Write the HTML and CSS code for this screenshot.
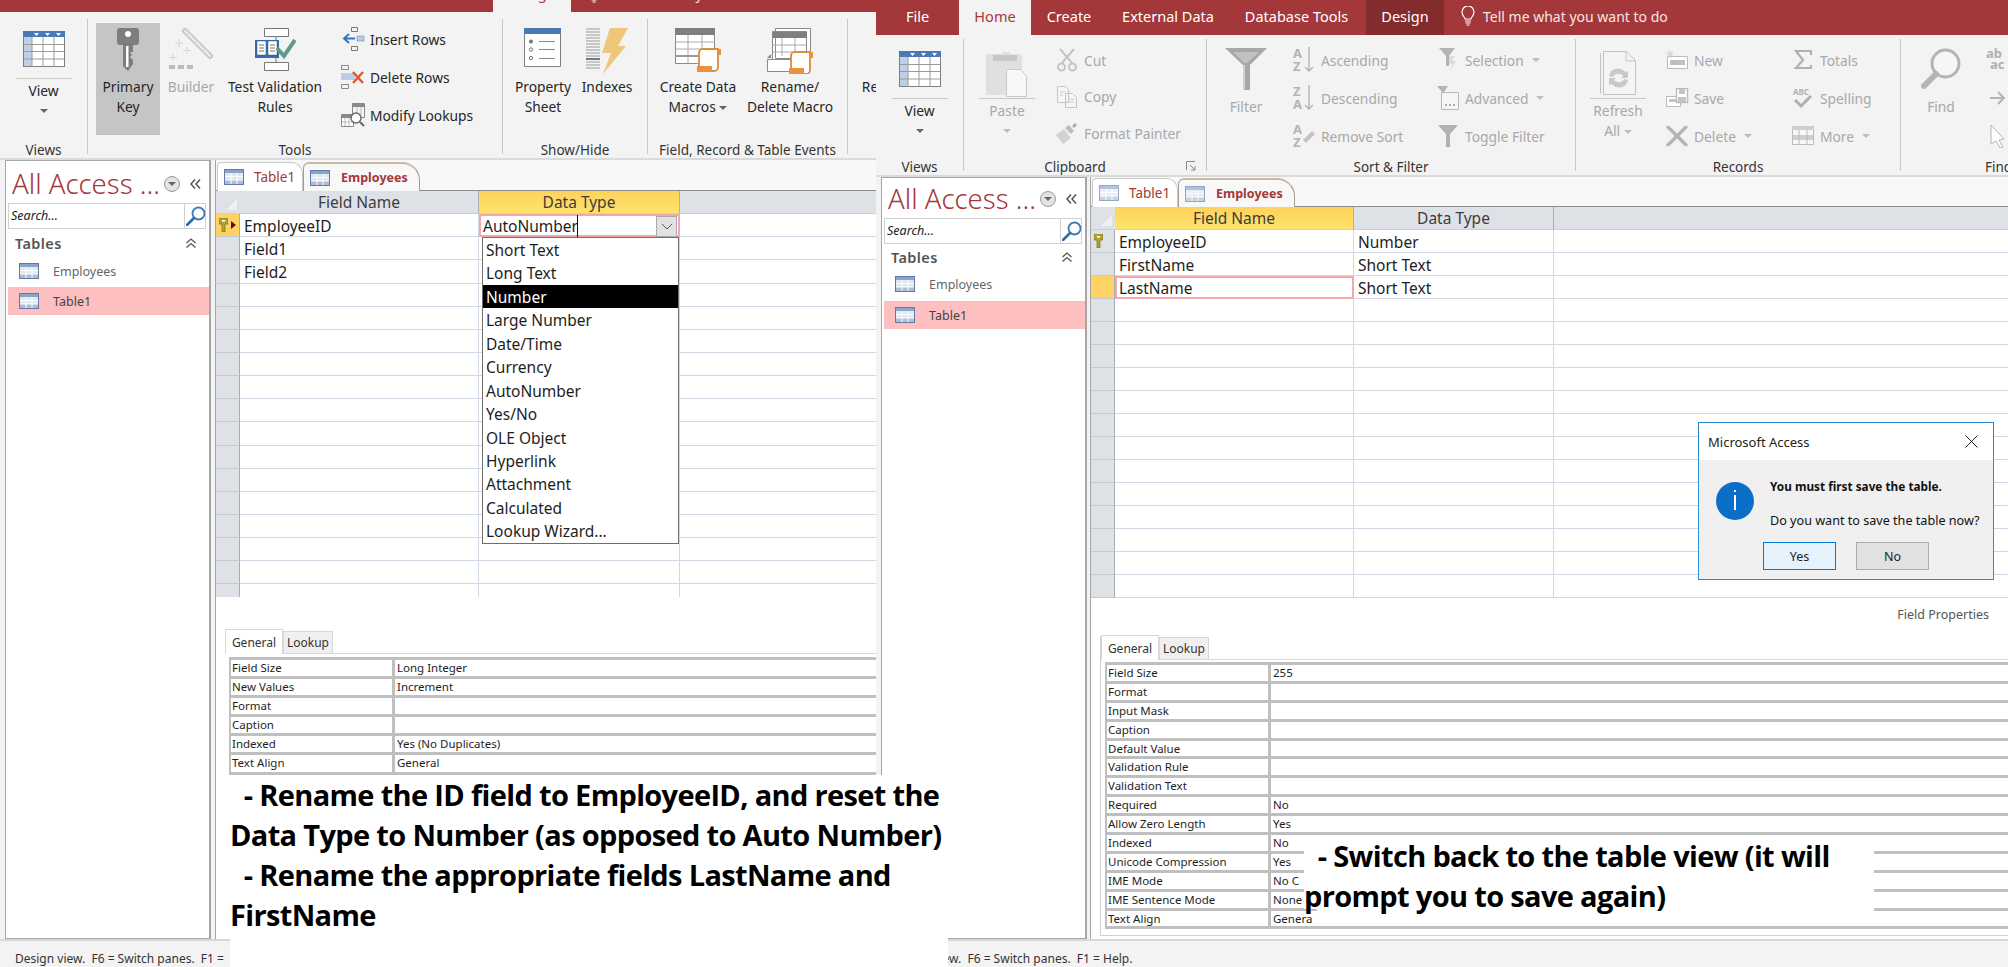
FILE: index.html
```html
<!DOCTYPE html>
<html lang="en">
<head>
    <meta charset="UTF-8">
    <meta name="viewport" content="width=device-width, initial-scale=1.0">
    <title>Access table design steps</title>
    <link rel="stylesheet" href="styles.css">
</head>
<body>
<svg class="defs" width="0" height="0">
    <defs>
        <symbol id="i-view" viewBox="0 0 42 36">
            <rect x="0.5" y="0.5" width="41" height="35" fill="#fff" stroke="#7f7f7f"/>
            <rect x="0" y="0" width="42" height="6" fill="#4a79b5"/>
            <rect x="1" y="6" width="8" height="29" fill="#bdd0e6"/>
            <path d="M9 6v30M20 6v30M31 6v30M1 13.5h40M1 20.5h40M1 28h40" stroke="#9a9a9a" fill="none"/>
            <path d="M11 2h5l-2.500 3zM22 2h5l-2.500 3zM33 2h5l-2.500 3z" fill="#fff"/>
        </symbol>
        <symbol id="i-tab" viewBox="0 0 20 16">
            <rect x="0.500" y="0.500" width="19" height="15" fill="#dfe7f2" stroke="#5f7ba6"/>
            <rect x="1" y="1" width="18" height="3" fill="#8aa5cc"/>
            <rect x="1" y="11" width="18" height="4" fill="#aebdd3"/>
            <path d="M7 4v11M13 4v11M1 7.500h18M1 11h18" stroke="#fff" fill="none"/>
        </symbol>
        <symbol id="i-key" viewBox="0 0 22 44">
            <path d="M3 0h16a3 3 0 0 1 3 3v11a3 3 0 0 1-3 3h-3v19l-5 7-5-5V17H3a3 3 0 0 1-3-3V3a3 3 0 0 1 3-3z" fill="#7d7d7d"/>
            <circle cx="11" cy="6" r="3" fill="#fff"/>
            <path d="M9 18h2.500v21H9z" fill="#fff"/>
            <path d="M16 24h-3l2 3-2 2 3 3z" fill="#c5c5c5"/>
        </symbol>
        <symbol id="i-builder" viewBox="0 0 44 44">
            <path d="M16 3l25 25" stroke="#c9c9c9" stroke-width="6" stroke-linecap="round" fill="none"/>
            <path d="M16 3l25 25" stroke="#ececec" stroke-width="2" stroke-linecap="round" fill="none"/>
            <path d="M10 11v8M6 15h8M18 19v7M14 22.500h8M4 26v7M0 29.500h8" stroke="#d4d4d4" fill="none"/>
            <path d="M0 37h6v4H0zM9 37h6v4H9zM18 37h6v4h-6z" fill="#bdbdbd"/>
        </symbol>
        <symbol id="i-validate" viewBox="0 0 42 44">
            <path d="M10.500.500h24v8h-24zM10.500 34.500h24v8h-24zM22 8v4M22 30v4" fill="#fff" stroke="#777"/>
            <path d="M1 12h24v18H1z" fill="#2f6fb5"/>
            <path d="M3 13h9v14H3zM14 13h9v14h-9z" fill="#fff" stroke="#555" stroke-width=".5"/>
            <path d="M5 17h5M5 20h5M5 23h5M16 17h5M16 20h5M16 23h5" stroke="#777"/>
            <path d="M23 20l7 8L41 12" stroke="#5f9b87" stroke-width="4" fill="none"/>
        </symbol>
        <symbol id="i-insert" viewBox="0 0 22 24">
            <path d="M9.500.500h6v4h-6zM9.500 19.500h6v4h-6z" fill="none" stroke="#777"/>
            <path d="M15 9h7v5h-7z" fill="#b9cde4" stroke="#7d9cc0" stroke-width=".7"/>
            <path d="M13 11.500H3M7 7l-5 4.500L7 16" stroke="#2f78c4" stroke-width="2" fill="none"/>
        </symbol>
        <symbol id="i-delrows" viewBox="0 0 24 24">
            <path d="M.500.500h7v4h-7zM.500 19.500h7v4h-7z" fill="none" stroke="#888"/>
            <path d="M0 8h14v7H0z" fill="#b9cde4"/>
            <path d="M12 7l10 11M22 7L12 18" stroke="#e2582c" stroke-width="2.400" fill="none"/>
        </symbol>
        <symbol id="i-lookups" viewBox="0 0 24 24">
            <path d="M11.500.500h12v14h-12z" fill="#f4f4f4" stroke="#888"/>
            <path d="M12 1h11v3H12z" fill="#8a8a8a"/>
            <path d="M.500 11.500h12v12H.500z" fill="#fff" stroke="#888"/>
            <path d="M1 12h11v3H1z" fill="#8a8a8a"/>
            <path d="M4 15v8M8 15v8M1 19h11M16 4v8M20 4v8" stroke="#bbb"/>
            <circle cx="15" cy="15" r="5" fill="#fff" stroke="#666" stroke-width="1.400"/>
            <path d="M19 19l4 4" stroke="#666" stroke-width="2"/>
        </symbol>
        <symbol id="i-sheet" viewBox="0 0 38 40">
            <path d="M.500.500h36v38H.500z" fill="#fff" stroke="#7f7f7f"/>
            <path d="M0 0h37v6H0z" fill="#4a79b5"/>
            <path d="M15 13.500h16M15 21.500h16M15 30.500h16" stroke="#888"/>
            <circle cx="7" cy="13.500" r="2" fill="#777"/>
            <circle cx="7" cy="21.500" r="1.700" fill="#fff" stroke="#777"/>
            <circle cx="7" cy="30" r="1.700" fill="#fff" stroke="#777"/>
        </symbol>
        <symbol id="i-indexes" viewBox="0 0 42 46">
            <path d="M0 1h14M0 4h14M0 7h14M0 10h14M0 13h14M0 16h14M0 19h14M0 22h14M0 25h14M0 28h14M0 31h14M0 34h14M0 37h14M0 40h14" stroke="#9a9a9a"/>
            <path d="M0 31h14" stroke="#777" stroke-width="2"/>
            <path d="M24 0h18L32 18h8L17 46l8-21h-9z" fill="#eec77c"/>
        </symbol>
        <symbol id="i-macro" viewBox="0 0 46 44">
            <path d="M.500.500h39v35H.500z" fill="#fff" stroke="#8a8a8a"/>
            <path d="M0 0h40v7H0z" fill="#7f7f7f"/>
            <path d="M13 7v28M27 7v28M1 14h39M1 21h39M1 28h39" stroke="#aaa"/>
            <path d="M0 27h24v2H0z" fill="#999"/>
            <path d="M27 21h16v18a4 4 0 0 1-4 4H26a4 4 0 0 1-2-2V25a4 4 0 0 1 3-4z" fill="#fff" stroke="#e08a3c" stroke-width="1.800"/>
            <path d="M42 21h4v6h-4zM22 38h15v6H22z" fill="#e8913f"/>
        </symbol>
        <symbol id="i-rename" viewBox="0 0 46 46">
            <path d="M8.500.500h35v30h-35zM5.500 3.500h34v30h-34z" fill="#fff" stroke="#8a8a8a"/>
            <path d="M6 4h34v6H6z" fill="#7f7f7f"/>
            <path d="M15 10v18M28 10v18M6 17h33M6 24h33" stroke="#aaa"/>
            <path d="M.500 31.500h30v12H.500z" fill="#fff" stroke="#8a8a8a"/>
            <path d="M0 30l4-4v4z" fill="#888"/>
            <path d="M27 24h16v18a4 4 0 0 1-4 4H26a4 4 0 0 1-2-2V28a4 4 0 0 1 3-4z" fill="#fff" stroke="#e08a3c" stroke-width="1.800"/>
            <path d="M42 24h4v6h-4zM22 40h15v6H22z" fill="#e8913f"/>
        </symbol>
        <symbol id="i-paste" viewBox="0 0 42 46">
            <path d="M2 3h14V1h8v2h10a2 2 0 0 1 2 2v37a2 2 0 0 1-2 2H2a2 2 0 0 1-2-2V5a2 2 0 0 1 2-2z" fill="#e1dfe1"/>
            <path d="M7 4h24v6H7z" fill="#c8c6c8"/>
            <path d="M20.500 18.500h14l6 7v20h-20z" fill="#f8f8f8" stroke="#c8c8c8"/>
        </symbol>
        <symbol id="i-cut" viewBox="0 0 20 24">
            <path d="M3 1l12 14M17 1L5 15" stroke="#c4c4c4" stroke-width="2" fill="none"/>
            <circle cx="4.500" cy="19" r="3.500" fill="none" stroke="#c4c4c4" stroke-width="2"/>
            <circle cx="15.500" cy="19" r="3.500" fill="none" stroke="#c4c4c4" stroke-width="2"/>
        </symbol>
        <symbol id="i-copy" viewBox="0 0 20 22">
            <path d="M.500.500h8l3 3v13H.500zM8.500 7.500h7l4 4v10h-11z" fill="#f6f6f6" stroke="#c4c4c4"/>
            <path d="M3 6h6M3 9h3M11 13h6M11 16h6" stroke="#ccc"/>
        </symbol>
        <symbol id="i-painter" viewBox="0 0 22 22">
            <path d="M0 13l8-6 7 9-8 6z" fill="#d2d2d2"/>
            <path d="M9 6l4-3 5 6-3 3z" fill="#bdbdbd"/>
            <path d="M16 4l3-3 2 2-3 3z" fill="#a9a9a9"/>
        </symbol>
        <symbol id="i-funnel" viewBox="0 0 42 42">
            <path d="M0 0h42L25 17v25h-7V17z" fill="#a8a6a8"/>
            <path d="M18 17h2v25h-2z" fill="#d0d0d0"/>
            <path d="M8 4h26L22 15h-3z" fill="#c2c0c2"/>
        </symbol>
        <symbol id="i-asc" viewBox="0 0 22 26">
            <text x="0" y="11" class="svg-az">A</text>
            <text x="0" y="24" class="svg-az">Z</text>
            <path d="M16 0v24M12 20l4 4 4-4" stroke="#b4b4b4" stroke-width="1.400" fill="none"/>
        </symbol>
        <symbol id="i-desc" viewBox="0 0 22 26">
            <text x="0" y="11" class="svg-az">Z</text>
            <text x="0" y="24" class="svg-az">A</text>
            <path d="M16 0v24M12 20l4 4 4-4" stroke="#b4b4b4" stroke-width="1.400" fill="none"/>
        </symbol>
        <symbol id="i-rmsort" viewBox="0 0 22 26">
            <text x="0" y="11" class="svg-az">A</text>
            <text x="0" y="24" class="svg-az">Z</text>
            <path d="M10 17l9-9 3 3-9 9z" fill="#c4c4c4"/>
        </symbol>
        <symbol id="i-selection" viewBox="0 0 18 24">
            <path d="M0 0h16L10 8v10H7V8z" fill="#b4b4b4"/>
            <path d="M10 8h6l-3 5h4l-6 10 2-7h-3z" fill="#dcdcdc"/>
        </symbol>
        <symbol id="i-advanced" viewBox="0 0 22 24">
            <path d="M0 0h11L7 6v9H5V6z" fill="#b4b4b4"/>
            <path d="M4.500 6.500h17v17h-17z" fill="#f6f6f6" stroke="#b8b8b8"/>
            <path d="M8 18h2v2H8zM12 18h2v2h-2zM16 18h2v2h-2z" fill="#aaa"/>
        </symbol>
        <symbol id="i-toggle" viewBox="0 0 20 22">
            <path d="M0 0h20L12 9v13H8V9z" fill="#b2b2b2"/>
        </symbol>
        <symbol id="i-refresh" viewBox="0 0 36 46">
            <path d="M.500 2.500v40M3.500.500h23l9 9v34h-32z" fill="#f6f3f7" stroke="#c2c2c2"/>
            <path d="M26 1v9h9" fill="none" stroke="#c2c2c2"/>
            <path d="M9 25a9 9 0 0 1 16-4l3-1v7h-7l2-2a6 6 0 0 0-10 1zM28 29a9 9 0 0 1-16 4l-3 1v-7h7l-2 2a6 6 0 0 0 10-1z" fill="#c9c9c9"/>
        </symbol>
        <symbol id="i-new" viewBox="0 0 22 20">
            <path d="M1.500 6.500h20v12h-20z" fill="#fff" stroke="#bbb"/>
            <path d="M4 10h15v5H4z" fill="#bfbfbf"/>
            <path d="M4 0v8M0 4h8M1 1l6 6M7 1L1 7" stroke="#d4d4d4"/>
        </symbol>
        <symbol id="i-save" viewBox="0 0 22 20">
            <path d="M.500 8.500h14v10H.500z" fill="#fff" stroke="#bbb"/>
            <path d="M3 11h8v3H3z" fill="#c4c4c4"/>
            <path d="M10.500.500h11v14h-11z" fill="#fff" stroke="#bbb" stroke-width="1.400"/>
            <path d="M13 1h6v5h-6zM12 9h8v5h-8z" fill="#c4c4c4"/>
        </symbol>
        <symbol id="i-delete" viewBox="0 0 22 20">
            <path d="M2 1l18 18M20 1L2 19" stroke="#b4b4b4" stroke-width="3.400" stroke-linecap="round"/>
        </symbol>
        <symbol id="i-sigma" viewBox="0 0 18 20">
            <path d="M17 5V1H2l7 9-7 8h15v-3" fill="none" stroke="#b0b0b0" stroke-width="2.200"/>
        </symbol>
        <symbol id="i-spell" viewBox="0 0 20 22">
            <text x="0" y="8" class="svg-abc">ABC</text>
            <path d="M2 13l6 6L18 9" stroke="#b0b0b0" stroke-width="3" fill="none"/>
        </symbol>
        <symbol id="i-more" viewBox="0 0 22 20">
            <path d="M.500.500h21v18h-21z" fill="#f7f7f7" stroke="#bbb"/>
            <path d="M0 0h22v4H0zM1 9h20v5H1z" fill="#cfcfcf"/>
            <path d="M7 4v15M15 4v15" stroke="#bbb"/>
        </symbol>
        <symbol id="i-find" viewBox="0 0 40 42">
            <circle cx="24.500" cy="15.500" r="13.500" fill="#f7f5f8" stroke="#b4b4b4" stroke-width="3"/>
            <path d="M15 26L3 38" stroke="#b4b4b4" stroke-width="6" stroke-linecap="round"/>
        </symbol>
        <symbol id="i-goto" viewBox="0 0 16 14">
            <path d="M0 7h13M8 1l6 6-6 6" fill="none" stroke="#b4b4b4" stroke-width="2"/>
        </symbol>
        <symbol id="i-arrow" viewBox="0 0 16 24">
            <path d="M1 1l13 14-5 1 4 7-3 1-4-7-5 3z" fill="#fff" stroke="#b4b4b4"/>
        </symbol>
        <symbol id="i-bulb" viewBox="0 0 14 20">
            <path d="M4 13c0-2-3-3-3-7a6 6 0 0 1 12 0c0 4-3 5-3 7z" fill="none" stroke="#fff" stroke-width="1.200"/>
            <path d="M4 15h6M4.500 17h5M5.500 19h3" stroke="#fff" stroke-width="1.200"/>
        </symbol>
        <symbol id="i-search" viewBox="0 0 20 20">
            <circle cx="12.500" cy="7.500" r="6" fill="none" stroke="#3f7cb8" stroke-width="1.800"/>
            <path d="M8 12l-7 7" stroke="#2d6aa8" stroke-width="2.600" stroke-linecap="round"/>
        </symbol>
        <symbol id="i-keysmall" viewBox="0 0 9 14">
            <path d="M0 0h9v6H6v8H3V6H0z" fill="#b5a52e" stroke="#6a5f14" stroke-width=".6"/>
            <path d="M3 2h3v1.500H3z" fill="#fff"/>
        </symbol>
        <symbol id="i-chev-left" viewBox="0 0 11 10">
            <path d="M5 .500L1 5l4 4.500M10 .500L6 5l4 4.500" fill="none" stroke="#555" stroke-width="1.500"/>
        </symbol>
        <symbol id="i-chev-up" viewBox="0 0 10 10">
            <path d="M.500 5L5 1l4.500 4M.500 9.500L5 5.500l4.500 4" fill="none" stroke="#555" stroke-width="1.300"/>
        </symbol>
    </defs>
</svg>

<div class="desktop">

    <!-- left screenshot -->
    <div class="window window-left">
        <div class="titlebar-cut">
            <div class="titlebar titlebar-shifted">
                <span class="tab-spacer"></span>
                <span class="top-tab top-tab-on">Design</span>
                <span class="tell tell-cut"><svg class="bulb"><use href="#i-bulb"/></svg>Tell me what you want to do</span>
            </div>
        </div>
        <div class="ribbon">
            <section class="group g-views">
                <div class="group-body">
                    <div class="big split">
                        <div class="big-icon"><svg width="42" height="36"><use href="#i-view"/></svg></div>
                        <div class="rule"></div>
                        <div>View</div>
                        <div class="caret-line"><span class="caret"></span></div>
                    </div>
                </div>
                <div class="group-label">Views</div>
            </section>
            <section class="group g-tools">
                <div class="group-body">
                    <div class="big big-pressed w64">
                        <div class="big-icon"><svg width="22" height="44"><use href="#i-key"/></svg></div>
                        <div>Primary<br>Key</div>
                    </div>
                    <div class="big off w62">
                        <div class="big-icon"><svg width="44" height="44"><use href="#i-builder"/></svg></div>
                        <div>Builder</div>
                    </div>
                    <div class="big w106">
                        <div class="big-icon"><svg width="42" height="44"><use href="#i-validate"/></svg></div>
                        <div>Test Validation<br>Rules</div>
                    </div>
                    <div class="small-col col-rows">
                        <div class="small"><svg width="22" height="24"><use href="#i-insert"/></svg>Insert Rows</div>
                        <div class="small"><svg width="24" height="24"><use href="#i-delrows"/></svg>Delete Rows</div>
                        <div class="small"><svg width="24" height="24"><use href="#i-lookups"/></svg>Modify Lookups</div>
                    </div>
                </div>
                <div class="group-label">Tools</div>
            </section>
            <section class="group g-show">
                <div class="group-body">
                    <div class="big w70">
                        <div class="big-icon"><svg width="38" height="40"><use href="#i-sheet"/></svg></div>
                        <div>Property<br>Sheet</div>
                    </div>
                    <div class="big w58">
                        <div class="big-icon"><svg width="42" height="46"><use href="#i-indexes"/></svg></div>
                        <div>Indexes</div>
                    </div>
                </div>
                <div class="group-label">Show/Hide</div>
            </section>
            <section class="group g-events">
                <div class="group-body">
                    <div class="big w92">
                        <div class="big-icon"><svg width="46" height="44"><use href="#i-macro"/></svg></div>
                        <div>Create Data<br>Macros <span class="caret"></span></div>
                    </div>
                    <div class="big w92">
                        <div class="big-icon"><svg width="46" height="46"><use href="#i-rename"/></svg></div>
                        <div>Rename/<br>Delete Macro</div>
                    </div>
                </div>
                <div class="group-label">Field, Record &amp; Table Events</div>
            </section>
            <section class="group g-cut">
                <div class="group-body">
                    <div class="big w60">
                        <div class="big-icon"></div>
                        <div class="cut-text">Re</div>
                    </div>
                </div>
            </section>
        </div>
        <div class="content">
            <aside class="nav">
                <div class="nav-head">
                    <span class="nav-title">All Access ...</span>
                    <span class="nav-drop"><span class="caret"></span></span>
                    <svg class="nav-chev" width="11" height="10"><use href="#i-chev-left"/></svg>
                </div>
                <div class="nav-search">
                    <span class="nav-search-text">Search...</span>
                    <span class="nav-search-btn"><svg width="20" height="20"><use href="#i-search"/></svg></span>
                </div>
                <div class="nav-section"><span>Tables</span><svg width="10" height="10"><use href="#i-chev-up"/></svg></div>
                <div class="nav-item"><svg width="20" height="16"><use href="#i-tab"/></svg>Employees</div>
                <div class="nav-item nav-item-on"><svg width="20" height="16"><use href="#i-tab"/></svg>Table1</div>
            </aside>
            <main class="main">
                <div class="doc-tabs">
                    <div class="doc-tab"><svg width="20" height="16"><use href="#i-tab"/></svg>Table1</div>
                    <div class="doc-tab doc-tab-on"><svg width="20" height="16"><use href="#i-tab"/></svg>Employees</div>
                </div>
                <div class="grid">
                    <div class="row head">
                        <div class="sel corner"></div>
                        <div class="cell">Field Name</div>
                        <div class="cell hot">Data Type</div>
                        <div class="cell fill"></div>
                    </div>
                    <div class="row">
                        <div class="sel sel-on"><svg width="9" height="14"><use href="#i-keysmall"/></svg><span class="sel-arrow"></span></div>
                        <div class="cell">EmployeeID</div>
                        <div class="cell active">AutoNumber<span class="text-caret"></span><span class="combo-btn"><svg width="10" height="6"><path d="M0 0l5 5 5-5" fill="none" stroke="#555"/></svg></span></div>
                        <div class="cell fill"></div>
                    </div>
                    <div class="row"><div class="sel"></div><div class="cell">Field1</div><div class="cell"></div><div class="cell fill"></div></div>
                    <div class="row"><div class="sel"></div><div class="cell">Field2</div><div class="cell"></div><div class="cell fill"></div></div>
                    <div class="row"><div class="sel"></div><div class="cell"></div><div class="cell"></div><div class="cell fill"></div></div>
                    <div class="row"><div class="sel"></div><div class="cell"></div><div class="cell"></div><div class="cell fill"></div></div>
                    <div class="row"><div class="sel"></div><div class="cell"></div><div class="cell"></div><div class="cell fill"></div></div>
                    <div class="row"><div class="sel"></div><div class="cell"></div><div class="cell"></div><div class="cell fill"></div></div>
                    <div class="row"><div class="sel"></div><div class="cell"></div><div class="cell"></div><div class="cell fill"></div></div>
                    <div class="row"><div class="sel"></div><div class="cell"></div><div class="cell"></div><div class="cell fill"></div></div>
                    <div class="row"><div class="sel"></div><div class="cell"></div><div class="cell"></div><div class="cell fill"></div></div>
                    <div class="row"><div class="sel"></div><div class="cell"></div><div class="cell"></div><div class="cell fill"></div></div>
                    <div class="row"><div class="sel"></div><div class="cell"></div><div class="cell"></div><div class="cell fill"></div></div>
                    <div class="row"><div class="sel"></div><div class="cell"></div><div class="cell"></div><div class="cell fill"></div></div>
                    <div class="row"><div class="sel"></div><div class="cell"></div><div class="cell"></div><div class="cell fill"></div></div>
                    <div class="row"><div class="sel"></div><div class="cell"></div><div class="cell"></div><div class="cell fill"></div></div>
                    <div class="row"><div class="sel"></div><div class="cell"></div><div class="cell"></div><div class="cell fill"></div></div>
                    <div class="row"><div class="sel"></div><div class="cell"></div><div class="cell"></div><div class="cell fill"></div></div>
                    <ul class="dropdown">
                        <li>Short Text</li>
                        <li>Long Text</li>
                        <li class="dropdown-on">Number</li>
                        <li>Large Number</li>
                        <li>Date/Time</li>
                        <li>Currency</li>
                        <li>AutoNumber</li>
                        <li>Yes/No</li>
                        <li>OLE Object</li>
                        <li>Hyperlink</li>
                        <li>Attachment</li>
                        <li>Calculated</li>
                        <li>Lookup Wizard...</li>
                    </ul>
                </div>
                <div class="field-props"></div>
                <div class="props">
                    <div class="props-tabs">
                        <div class="props-tab props-tab-on">General</div>
                        <div class="props-tab">Lookup</div>
                    </div>
                    <div class="props-table">
                        <div class="prop"><span>Field Size</span><span>Long Integer</span></div>
                        <div class="prop"><span>New Values</span><span>Increment</span></div>
                        <div class="prop"><span>Format</span><span></span></div>
                        <div class="prop"><span>Caption</span><span></span></div>
                        <div class="prop"><span>Indexed</span><span>Yes (No Duplicates)</span></div>
                        <div class="prop"><span>Text Align</span><span>General</span></div>
                    </div>
                </div>
            </main>
        </div>
        <div class="status">Design view.&nbsp; F6 = Switch panes.&nbsp; F1 =</div>
    </div>

    <!-- right screenshot -->
    <div class="window window-right">
        <div class="titlebar">
            <span class="top-tab t-file">File</span>
            <span class="top-tab top-tab-on t-home">Home</span>
            <span class="top-tab t-create">Create</span>
            <span class="top-tab t-external">External Data</span>
            <span class="top-tab t-db">Database Tools</span>
            <span class="top-tab top-tab-dark">Design</span>
            <span class="tell"><svg class="bulb"><use href="#i-bulb"/></svg>Tell me what you want to do</span>
        </div>
        <div class="ribbon">
            <section class="group g-views">
                <div class="group-body">
                    <div class="big split">
                        <div class="big-icon"><svg width="42" height="36"><use href="#i-view"/></svg></div>
                        <div class="rule"></div>
                        <div>View</div>
                        <div class="caret-line"><span class="caret"></span></div>
                    </div>
                </div>
                <div class="group-label">Views</div>
            </section>
            <section class="group g-clip">
                <div class="group-body">
                    <div class="big split off w60">
                        <div class="big-icon"><svg width="42" height="46"><use href="#i-paste"/></svg></div>
                        <div class="rule"></div>
                        <div>Paste</div>
                        <div class="caret-line"><span class="caret"></span></div>
                    </div>
                    <div class="small-col off col-clip">
                        <div class="small"><svg width="20" height="24"><use href="#i-cut"/></svg>Cut</div>
                        <div class="small"><svg width="20" height="22"><use href="#i-copy"/></svg>Copy</div>
                        <div class="small"><svg width="22" height="22"><use href="#i-painter"/></svg>Format Painter</div>
                    </div>
                </div>
                <div class="group-label label-launcher">Clipboard<svg class="launcher" width="10" height="10"><path d="M.500 9V.500H9M4 4l5 5M9 5v4H5" fill="none" stroke="#888"/></svg></div>
            </section>
            <section class="group g-sort">
                <div class="group-body">
                    <div class="big off w60">
                        <div class="big-icon"><svg width="42" height="42"><use href="#i-funnel"/></svg></div>
                        <div>Filter</div>
                    </div>
                    <div class="small-col off col-sort">
                        <div class="small"><svg width="22" height="26"><use href="#i-asc"/></svg>Ascending</div>
                        <div class="small"><svg width="22" height="26"><use href="#i-desc"/></svg>Descending</div>
                        <div class="small"><svg width="22" height="26"><use href="#i-rmsort"/></svg>Remove Sort</div>
                    </div>
                    <div class="small-col off col-filter">
                        <div class="small"><svg width="18" height="24"><use href="#i-selection"/></svg>Selection <span class="caret"></span></div>
                        <div class="small"><svg width="22" height="24"><use href="#i-advanced"/></svg>Advanced <span class="caret"></span></div>
                        <div class="small"><svg width="20" height="22"><use href="#i-toggle"/></svg>Toggle Filter</div>
                    </div>
                </div>
                <div class="group-label">Sort &amp; Filter</div>
            </section>
            <section class="group g-records">
                <div class="group-body">
                    <div class="big split off w60">
                        <div class="big-icon"><svg width="36" height="46"><use href="#i-refresh"/></svg></div>
                        <div class="rule"></div>
                        <div>Refresh<br>All <span class="caret"></span></div>
                    </div>
                    <div class="small-col off col-rec">
                        <div class="small"><svg width="22" height="20"><use href="#i-new"/></svg>New</div>
                        <div class="small"><svg width="22" height="20"><use href="#i-save"/></svg>Save</div>
                        <div class="small"><svg width="22" height="20"><use href="#i-delete"/></svg>Delete<span class="caret caret-far"></span></div>
                    </div>
                    <div class="small-col off col-tot">
                        <div class="small"><svg width="18" height="20"><use href="#i-sigma"/></svg>Totals</div>
                        <div class="small"><svg width="20" height="22"><use href="#i-spell"/></svg>Spelling</div>
                        <div class="small"><svg width="22" height="20"><use href="#i-more"/></svg>More <span class="caret"></span></div>
                    </div>
                </div>
                <div class="group-label">Records</div>
            </section>
            <section class="group g-find">
                <div class="group-body">
                    <div class="big off w56">
                        <div class="big-icon"><svg width="40" height="42"><use href="#i-find"/></svg></div>
                        <div>Find</div>
                    </div>
                    <div class="small-col off col-find">
                        <div class="small"><svg class="svg-replace" width="24" height="24"><text x="0" y="10">ab</text><text x="4" y="21">ac</text></svg></div>
                        <div class="small"><svg width="16" height="14"><use href="#i-goto"/></svg></div>
                        <div class="small"><svg width="16" height="24"><use href="#i-arrow"/></svg></div>
                    </div>
                </div>
                <div class="group-label label-find">Find</div>
            </section>
        </div>
        <div class="content">
            <aside class="nav">
                <div class="nav-head">
                    <span class="nav-title">All Access ...</span>
                    <span class="nav-drop"><span class="caret"></span></span>
                    <svg class="nav-chev" width="11" height="10"><use href="#i-chev-left"/></svg>
                </div>
                <div class="nav-search">
                    <span class="nav-search-text">Search...</span>
                    <span class="nav-search-btn"><svg width="20" height="20"><use href="#i-search"/></svg></span>
                </div>
                <div class="nav-section"><span>Tables</span><svg width="10" height="10"><use href="#i-chev-up"/></svg></div>
                <div class="nav-item"><svg width="20" height="16"><use href="#i-tab"/></svg>Employees</div>
                <div class="nav-item nav-item-on"><svg width="20" height="16"><use href="#i-tab"/></svg>Table1</div>
            </aside>
            <main class="main">
                <div class="doc-tabs">
                    <div class="doc-tab doc-pale"><svg width="20" height="16"><use href="#i-tab"/></svg>Table1</div>
                    <div class="doc-tab doc-tab-on doc-pale"><svg width="20" height="16"><use href="#i-tab"/></svg>Employees</div>
                </div>
                <div class="grid">
                    <div class="row head">
                        <div class="sel corner"></div>
                        <div class="cell hot">Field Name</div>
                        <div class="cell">Data Type</div>
                        <div class="cell fill"></div>
                    </div>
                    <div class="row">
                        <div class="sel"><svg width="9" height="14"><use href="#i-keysmall"/></svg></div>
                        <div class="cell">EmployeeID</div>
                        <div class="cell">Number</div>
                        <div class="cell fill"></div>
                    </div>
                    <div class="row"><div class="sel"></div><div class="cell">FirstName</div><div class="cell">Short Text</div><div class="cell fill"></div></div>
                    <div class="row"><div class="sel sel-on"></div><div class="cell active">LastName</div><div class="cell">Short Text</div><div class="cell fill"></div></div>
                    <div class="row"><div class="sel"></div><div class="cell"></div><div class="cell"></div><div class="cell fill"></div></div>
                    <div class="row"><div class="sel"></div><div class="cell"></div><div class="cell"></div><div class="cell fill"></div></div>
                    <div class="row"><div class="sel"></div><div class="cell"></div><div class="cell"></div><div class="cell fill"></div></div>
                    <div class="row"><div class="sel"></div><div class="cell"></div><div class="cell"></div><div class="cell fill"></div></div>
                    <div class="row"><div class="sel"></div><div class="cell"></div><div class="cell"></div><div class="cell fill"></div></div>
                    <div class="row"><div class="sel"></div><div class="cell"></div><div class="cell"></div><div class="cell fill"></div></div>
                    <div class="row"><div class="sel"></div><div class="cell"></div><div class="cell"></div><div class="cell fill"></div></div>
                    <div class="row"><div class="sel"></div><div class="cell"></div><div class="cell"></div><div class="cell fill"></div></div>
                    <div class="row"><div class="sel"></div><div class="cell"></div><div class="cell"></div><div class="cell fill"></div></div>
                    <div class="row"><div class="sel"></div><div class="cell"></div><div class="cell"></div><div class="cell fill"></div></div>
                    <div class="row"><div class="sel"></div><div class="cell"></div><div class="cell"></div><div class="cell fill"></div></div>
                    <div class="row"><div class="sel"></div><div class="cell"></div><div class="cell"></div><div class="cell fill"></div></div>
                    <div class="row"><div class="sel"></div><div class="cell"></div><div class="cell"></div><div class="cell fill"></div></div>
                </div>
                <div class="field-props">Field Properties</div>
                <div class="props">
                    <div class="props-tabs">
                        <div class="props-tab props-tab-on">General</div>
                        <div class="props-tab">Lookup</div>
                    </div>
                    <div class="props-table">
                        <div class="prop"><span>Field Size</span><span>255</span></div>
                        <div class="prop"><span>Format</span><span></span></div>
                        <div class="prop"><span>Input Mask</span><span></span></div>
                        <div class="prop"><span>Caption</span><span></span></div>
                        <div class="prop"><span>Default Value</span><span></span></div>
                        <div class="prop"><span>Validation Rule</span><span></span></div>
                        <div class="prop"><span>Validation Text</span><span></span></div>
                        <div class="prop"><span>Required</span><span>No</span></div>
                        <div class="prop"><span>Allow Zero Length</span><span>Yes</span></div>
                        <div class="prop"><span>Indexed</span><span>No</span></div>
                        <div class="prop"><span>Unicode Compression</span><span>Yes</span></div>
                        <div class="prop"><span>IME Mode</span><span>No C</span></div>
                        <div class="prop"><span>IME Sentence Mode</span><span>None</span></div>
                        <div class="prop"><span>Text Align</span><span>Genera</span></div>
                    </div>
                </div>
            </main>
        </div>
        <div class="status">Design view.&nbsp; F6 = Switch panes.&nbsp; F1 = Help.</div>

        <div class="dialog">
            <div class="dialog-title">
                <span>Microsoft Access</span>
                <svg width="13" height="13"><path d="M.500.500l12 12M12.500.500l-12 12" stroke="#222" fill="none"/></svg>
            </div>
            <div class="dialog-body">
                <div class="dialog-msg">
                    <span class="info-icon"><span class="info-dot"></span><span class="info-bar"></span></span>
                    <div class="dialog-text">
                        <b>You must first save the table.</b>
                        <p>Do you want to save the table now?</p>
                    </div>
                </div>
                <div class="dialog-buttons">
                    <button class="btn btn-yes">Yes</button>
                    <button class="btn">No</button>
                </div>
            </div>
        </div>
    </div>

    <!-- notes pasted over both screenshots -->
    <div class="note note-left">  - Rename the ID field to EmployeeID, and reset the
Data Type to Number (as opposed to Auto Number)
  - Rename the appropriate fields LastName and
FirstName</div>
    <div class="note note-right">  - Switch back to the table view (it will
prompt you to save again)</div>
</div>
</body>
</html>
```

FILE: styles.css
```css
* {
    box-sizing: border-box;
}
html, body {
    margin: 0;
    padding: 0;
    overflow: hidden;
}
body {
    width: 2008px;
    height: 967px;
    background: #fff;
    color: #262626;
    font-family: "Noto Sans", "Open Sans", sans-serif;
    font-size: 13.8px;
}
.defs {
    position: absolute;
}
.svg-az {
    font: 700 13px "Noto Sans", sans-serif;
    fill: #b4b4b4;
}
.svg-abc {
    font: 700 8px "Noto Sans", sans-serif;
    fill: #b0b0b0;
}
.svg-replace text {
    font: 700 13px "Noto Sans", sans-serif;
    fill: #b0b0b0;
}

.desktop {
    position: relative;
    display: flex;
    width: 2008px;
    height: 967px;
    overflow: hidden;
}
.window {
    position: relative;
    display: flex;
    flex-direction: column;
    height: 967px;
    overflow: hidden;
    background: #f3f3f3;
}
.window-left {
    width: 876px;
    flex: none;
    --ribbon-h: 145px;
    --body-h: 124px;
    --group-top: 4px;
    --tabs-h: 31px;
}
.window-right {
    width: 1132px;
    flex: none;
    --ribbon-h: 142px;
    --body-h: 121px;
    --group-top: 4px;
    --tabs-h: 30px;
}

/* Top red bar */
.titlebar {
    display: flex;
    align-items: stretch;
    flex: none;
    height: 35px;
    padding-bottom: 3px;
    background: #a4373a;
    color: #fff;
    font-size: 14.5px;
}
.titlebar-cut {
    flex: none;
    height: 15px;
    overflow: hidden;
}
.titlebar-shifted {
    margin-top: -23px;
}
.tab-spacer {
    width: 493px;
}
.top-tab {
    position: relative;
    display: flex;
    align-items: center;
    justify-content: center;
    flex: none;
    width: 78px;
}
.top-tab-on::before,
.top-tab-dark::before {
    content: "";
    position: absolute;
    left: 0;
    right: 0;
    top: 100%;
    height: 3px;
    background: inherit;
}
.top-tab-on {
    background: #f3f3f3;
    color: #a4373a;
}
.top-tab-dark {
    background: #842b2e;
    margin-left: 2px;
}
.t-file { width: 83px; }
.t-home { width: 72px; }
.t-create { width: 76px; }
.t-external { width: 122px; }
.t-db { width: 135px; }
.tell {
    display: flex;
    align-items: center;
    margin-left: 17px;
    color: #f6e6e6;
    font-size: 14px;
}
.tell-cut {
    margin-left: 16px;
}
.bulb {
    width: 14px;
    height: 20px;
    margin-right: 8px;
}

/* Ribbon */
.ribbon {
    display: flex;
    flex: none;
    height: var(--ribbon-h);
    padding-top: var(--group-top);
    background: #f3f3f3;
    border-bottom: 2px solid #dadada;
    overflow: hidden;
}
.group {
    display: flex;
    flex-direction: column;
    flex: none;
    height: calc(var(--ribbon-h) - 10px);
    border-right: 1px solid #c8c8c8;
}
.group-body {
    display: flex;
    height: var(--body-h);
}
.group-label {
    position: relative;
    height: 12px;
    line-height: 17px;
    text-align: center;
    color: #333;
    font-size: 13.5px;
}
.g-views { width: 88px; }
.g-tools { width: 415px; }
.g-tools .group-body { padding-left: 8px; }
.g-show { width: 145px; }
.g-show .group-body { padding-left: 5px; }
.g-events { width: 200px; }
.g-events .group-body { padding-left: 4px; }
.g-cut { width: 28px; border: 0; }
.g-cut .big { margin-left: -16px; }
.g-clip { width: 243px; }
.g-clip .group-body { padding-left: 13px; }
.g-sort { width: 369px; }
.g-sort .group-body { padding-left: 9px; }
.g-records { width: 325px; }
.g-records .group-body { padding-left: 12px; }
.g-find { width: 108px; border: 0; }
.g-find .group-body { padding-left: 12px; }
.label-launcher { padding-right: 20px; }
.launcher {
    position: absolute;
    right: 10px;
    top: 2px;
}
.label-find {
    text-align: left;
    padding-left: 84px;
}

.big {
    display: flex;
    flex-direction: column;
    align-items: center;
    flex: none;
    height: 112px;
    margin-top: 4px;
    padding-top: 5px;
    line-height: 20px;
    text-align: center;
}
.big-icon {
    display: flex;
    align-items: flex-start;
    justify-content: center;
    height: 49px;
}
.big-pressed {
    background: #c5c5c5;
}
.split {
    width: 87px;
}
.split .big-icon {
    height: 50px;
    padding-top: 3px;
}
.split .rule {
    width: 56px;
    height: 1px;
    margin-bottom: 2px;
    background: #c8c8c8;
}
.caret-line {
    display: flex;
    align-items: center;
    height: 20px;
}
.caret {
    display: inline-block;
    width: 0;
    height: 0;
    vertical-align: middle;
    border-left: 4px solid transparent;
    border-right: 4px solid transparent;
    border-top: 4px solid #666;
}
.caret-far {
    margin-left: 20px;
}
.off {
    color: #a8a8a8;
}
.off .caret {
    border-top-color: #bdbdbd;
}
.w56 { width: 56px; }
.w58 { width: 58px; }
.w60 { width: 60px; }
.w62 { width: 62px; }
.w64 { width: 64px; }
.w70 { width: 70px; }
.w92 { width: 92px; }
.w106 { width: 106px; }
.cut-text {
    margin-left: 16px;
}

.small-col {
    display: flex;
    flex-direction: column;
    flex: none;
    margin-top: 2px;
}
.small {
    display: flex;
    align-items: center;
    gap: 5px;
    height: 38px;
    white-space: nowrap;
}
.small svg {
    flex: none;
    width: 24px;
}
.small .caret {
    margin-left: 3px;
}
.col-rows { margin-left: 13px; margin-top: 1px; }
.col-clip { margin-left: 18px; width: 140px; margin-top: 3px; }
.col-clip .small { height: 36.500px; }
.col-sort { margin-left: 16px; width: 144px; }
.col-filter { width: 130px; }
.col-rec { margin-left: 17px; width: 126px; }
.col-tot { width: 100px; }
.col-find { margin-left: 17px; }

/* Content split */
.content {
    display: flex;
    flex: 1;
    min-height: 0;
    border-bottom: 2px solid #d8d8d8;
}
.nav {
    display: flex;
    flex-direction: column;
    flex: none;
    width: 206px;
    margin-left: 5px;
    background: #fff;
    border: 1px solid #a6a6a6;
    border-width: 1px 2px 1px 1px;
    padding: 0 2px;
}
.nav-head {
    display: flex;
    align-items: center;
    height: 42px;
    padding: 3px 0 0 4px;
}
.nav-title {
    flex: 1;
    color: #a4373a;
    font-size: 27.500px;
    font-weight: 300;
    line-height: 34px;
    white-space: nowrap;
    overflow: hidden;
}
.nav-drop {
    display: flex;
    align-items: center;
    justify-content: center;
    flex: none;
    width: 16px;
    height: 16px;
    margin: 0 10px 0 3px;
    background: #e4e4e4;
    border: 1px solid #9a9a9a;
    border-radius: 50%;
}
.nav-chev {
    flex: none;
    margin-right: 6px;
}
.nav-search {
    display: flex;
    height: 26px;
    margin-right: 1px;
    border: 1px solid #d0d0d0;
}
.nav-search-text {
    flex: 1;
    padding-left: 2px;
    color: #222;
    font-size: 12.500px;
    font-style: italic;
    line-height: 23px;
}
.nav-search-btn {
    width: 21px;
    padding: 2px 0 0 1px;
    border-left: 1px solid #d0d0d0;
}
.nav-section {
    display: flex;
    align-items: center;
    justify-content: space-between;
    height: 28px;
    padding: 0 11px 0 7px;
    color: #555;
    font-size: 14.500px;
    font-weight: 600;
    letter-spacing: .4px;
}
.nav-item {
    display: flex;
    align-items: center;
    gap: 14px;
    height: 28px;
    padding-left: 11px;
    margin-bottom: 2px;
    color: #666;
    font-size: 12.500px;
}
.nav-item-on {
    width: 201px;
    color: #444;
    background: #fdbfc0;
}
.window-right .nav-head { height: 40px; padding-top: 2px; }
.window-right .nav-section { height: 26px; }
.window-right .nav-item { margin-bottom: 3px; }

.main {
    display: flex;
    flex-direction: column;
    flex: 1;
    min-width: 0;
    margin-left: 3px;
    background: #fff;
    border-left: 1px solid #a6a6a6;
}
.window-left .main {
    margin-left: 4px;
}
.doc-tabs {
    display: flex;
    flex: none;
    align-items: flex-end;
    height: var(--tabs-h);
    padding-left: 1px;
    background: #f8f8f8;
    border-bottom: 1px solid #8c8c8c;
}
.doc-tab {
    display: flex;
    align-items: center;
    gap: 10px;
    width: 86px;
    height: 29px;
    padding-left: 6px;
    margin-bottom: -1px;
    background: #fff;
    border: 1px solid #c8c8c8;
    border-bottom: 0;
    border-radius: 4px 12px 0 0;
    color: #a4373a;
    font-size: 13.500px;
}
.doc-tab-on {
    width: 117px;
    gap: 11px;
    background: #f8f8f8;
    border: 1px solid #ab9c8e;
    border-top: 2px solid #c8b8a8;
    border-bottom: 0;
    border-radius: 6px 18px 0 0;
    font-weight: 700;
    font-size: 12.500px;
}
.doc-pale svg {
    opacity: .65;
}

.grid {
    position: relative;
    flex: none;
    height: 406px;
    overflow: hidden;
}
.window-right .grid {
    height: 397px;
}
.row {
    display: flex;
    height: 23.150px;
}
.window-right .row {
    height: 23px;
}
.sel {
    display: flex;
    align-items: center;
    flex: none;
    width: 24px;
    padding-left: 3px;
    background: #dee1e6;
    border-bottom: 1px solid #c4c8cf;
    border-right: 1px solid #a6acb4;
}
.sel-on {
    background: #fed364;
}
.sel-arrow {
    margin-left: 3px;
    border-top: 4px solid transparent;
    border-bottom: 4px solid transparent;
    border-left: 5px solid #5a1010;
}
.cell {
    position: relative;
    flex: none;
    width: 239px;
    height: 100%;
    padding-left: 4px;
    border-bottom: 1px solid #d0d7e5;
    border-right: 1px solid #d0d7e5;
    color: #1e1e1e;
    font-size: 15.500px;
    line-height: 25px;
    white-space: nowrap;
}
.cell + .cell {
    width: 201px;
}
.window-right .cell + .cell {
    width: 200px;
}
.cell.fill,
.window-right .cell.fill {
    flex: 1;
    border-right: 0;
}
.head .cell {
    padding: 0;
    background: #dee1e6;
    border-bottom: 1px solid #c9d0dc;
    border-right: 1px solid #aab0b8;
    color: #3c3c3c;
    line-height: 23px;
    text-align: center;
}
.head .fill {
    border-right: 0;
}
.head .hot {
    background: linear-gradient(#fdd25c, #ffe36c);
}
.corner {
    position: relative;
    border-bottom-color: #c9d0dc;
    border-right: 0;
}
.corner::after {
    content: "";
    position: absolute;
    right: 3px;
    bottom: 3px;
    border-left: 11px solid transparent;
    border-bottom: 11px solid #eef0f3;
}
.active {
    outline: 2px solid #f6a6ad;
    outline-offset: -2px;
    z-index: 2;
}
.text-caret {
    position: absolute;
    top: 1px;
    left: 98px;
    width: 1px;
    height: 22px;
    background: #111;
}
.combo-btn {
    position: absolute;
    right: 2px;
    top: 2px;
    display: flex;
    align-items: center;
    justify-content: center;
    width: 21px;
    height: 21px;
    background: #e1e1e1;
    border: 1px solid #aaa;
}
.dropdown {
    position: absolute;
    left: 266px;
    top: 46px;
    width: 197px;
    height: 307px;
    margin: 0;
    padding: 0;
    list-style: none;
    background: #fff;
    border: 1px solid #6e6e6e;
    color: #1e1e1e;
    font-size: 15.500px;
    z-index: 3;
}
.dropdown li {
    height: 23.450px;
    padding-left: 3px;
    line-height: 25px;
}
.dropdown .dropdown-on {
    background: #000;
    color: #fff;
}

.field-props {
    flex: none;
    height: 32px;
    padding-right: 19px;
    color: #555;
    font-size: 12.500px;
    line-height: 22px;
    text-align: right;
}
.props {
    flex: none;
    margin-left: 9px;
    height: 300px;
    border-left: 1px solid #d0d0d0;
    border-bottom: 1px solid #d0d0d0;
}
.window-left .props {
    border: 0;
}
.props-tabs {
    display: flex;
    align-items: flex-end;
    height: 25px;
    border-bottom: 1px solid #d8d8d8;
}
.window-right .props-tabs {
    height: 24px;
}
.props-tab {
    display: flex;
    align-items: center;
    justify-content: center;
    width: 50px;
    height: 22px;
    background: #f0f0f0;
    border: 1px solid #d8d8d8;
    border-bottom: 0;
    color: #333;
    font-size: 12px;
}
.props-tab-on {
    width: 58px;
    height: 25px;
    margin-bottom: -1px;
    background: #fff;
}
.props-table {
    margin: 3px 0 0 4px;
    border-top: 3px solid #bfbfbf;
    border-left: 2px solid #bfbfbf;
}
.window-right .props-table {
    margin-top: 2px;
}
.prop {
    display: flex;
    height: 19.100px;
    border-bottom: 3px solid #bfbfbf;
    color: #1e1e1e;
    font-size: 11.500px;
    line-height: 16px;
    white-space: nowrap;
}
.window-right .prop {
    height: 18.900px;
}
.prop span:first-child {
    width: 164px;
    padding-left: 1px;
    border-right: 3px solid #bfbfbf;
}
.prop span:last-child {
    padding-left: 2px;
}

.status {
    flex: none;
    height: 26px;
    padding: 10px 0 0 15px;
    background: #f3f3f3;
    color: #333;
    font-size: 12px;
    line-height: 16px;
    white-space: nowrap;
}

/* Dialog box */
.dialog {
    position: absolute;
    left: 822px;
    top: 422px;
    width: 296px;
    height: 158px;
    background: #f0f0f0;
    border: 1px solid #2a8ad4;
    font-size: 12.500px;
    z-index: 5;
}
.dialog-title {
    display: flex;
    align-items: center;
    justify-content: space-between;
    height: 37px;
    padding: 0 15px 0 9px;
    background: #fff;
    color: #222;
    font-size: 13px;
}
.dialog-body {
    padding: 0 0 0 36px;
}
.dialog-msg {
    display: flex;
    gap: 16px;
    height: 82px;
    padding-top: 22px;
    margin-left: -19px;
}
.info-icon {
    position: relative;
    display: flex;
    flex-direction: column;
    align-items: center;
    flex: none;
    width: 38px;
    height: 38px;
    padding-top: 8px;
    background: #0b6fc7;
    border-radius: 50%;
}
.info-dot {
    width: 2px;
    height: 2px;
    margin-bottom: 3px;
    background: #fff;
}
.info-bar {
    width: 2px;
    height: 15px;
    background: #fff;
}
.dialog-text {
    margin-top: -5px;
    color: #111;
    font-size: 12.600px;
    line-height: 18px;
    white-space: nowrap;
}
.dialog-text b {
    font-size: 11.800px;
}
.dialog-text p {
    margin: 16px 0 0;
}
.dialog-buttons {
    display: flex;
    gap: 20px;
    padding-left: 28px;
}
.btn {
    width: 73px;
    height: 28px;
    padding: 0;
    background: #e1e1e1;
    border: 1px solid #adadad;
    color: #222;
    font: 12.500px "Noto Sans", sans-serif;
}
.btn-yes {
    background: #e5f1fb;
    border-color: #0078d7;
}

/* Bold notes over the screenshots */
.note {
    position: absolute;
    background: #fff;
    color: #000;
    font-family: "Open Sans", "Noto Sans", sans-serif;
    font-size: 29px;
    font-weight: 700;
    letter-spacing: -.66px;
    line-height: 40px;
    white-space: pre;
    z-index: 6;
}
.note-left {
    left: 230px;
    top: 775px;
    width: 718px;
    height: 192px;
}
.note-right {
    left: 1304px;
    top: 836px;
    width: 570px;
    height: 73px;
}
.note-right::after {
    content: "";
    position: absolute;
    left: 13px;
    top: 73px;
    right: 0;
    height: 15px;
    background: #fff;
    z-index: -1;
}
```
